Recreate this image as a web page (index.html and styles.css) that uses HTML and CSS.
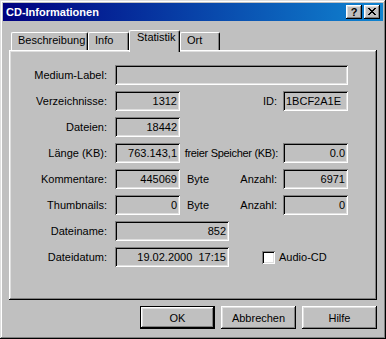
FILE: index.html
```html
<!DOCTYPE html>
<html lang="de">
<head>
  <meta charset="UTF-8">
  <title>CD-Informationen</title>
  <link rel="stylesheet" href="styles.css">
</head>
<body>
  <div class="window">
    <div class="titlebar">
      <span class="title">CD-Informationen</span>
      <span class="tbtn help">?</span>
      <span class="tbtn close">
        <svg width="8" height="7" viewBox="0 0 8 7" shape-rendering="crispEdges">
          <rect x="0" y="0" width="2" height="1"/><rect x="6" y="0" width="2" height="1"/>
          <rect x="1" y="1" width="2" height="1"/><rect x="5" y="1" width="2" height="1"/>
          <rect x="2" y="2" width="4" height="1"/>
          <rect x="3" y="3" width="2" height="1"/>
          <rect x="2" y="4" width="4" height="1"/>
          <rect x="1" y="5" width="2" height="1"/><rect x="5" y="5" width="2" height="1"/>
          <rect x="0" y="6" width="2" height="1"/><rect x="6" y="6" width="2" height="1"/>
        </svg>
      </span>
    </div>

    <div class="content">
      <div class="tabs">
        <div class="tab t-beschreibung">Beschreibung</div>
        <div class="tab t-info">Info</div>
        <div class="tab active t-statistik">Statistik</div>
        <div class="tab t-ort">Ort</div>
      </div>

      <div class="panel">
        <div class="grid">
          <div class="label">Medium-Label:</div>
          <div class="field span3"></div>

          <div class="label">Verzeichnisse:</div>
          <div class="field">1312</div>
          <div class="mid right">ID:</div>
          <div class="field left">1BCF2A1E</div>

          <div class="label">Dateien:</div>
          <div class="field">18442</div>
          <div class="mid"></div>
          <div></div>

          <div class="label">Länge (KB):</div>
          <div class="field">763.143,1</div>
          <div class="mid right tight">freier Speicher (KB):</div>
          <div class="field">0.0</div>

          <div class="label">Kommentare:</div>
          <div class="field">445069</div>
          <div class="mid split"><span>Byte</span><span>Anzahl:</span></div>
          <div class="field">6971</div>

          <div class="label">Thumbnails:</div>
          <div class="field">0</div>
          <div class="mid split"><span>Byte</span><span>Anzahl:</span></div>
          <div class="field">0</div>

          <div class="label">Dateiname:</div>
          <div class="wide"><div class="field long">852</div></div>

          <div class="label">Dateidatum:</div>
          <div class="wide">
            <div class="field long">19.02.2000  17:15</div>
            <label class="check"><span class="box"></span>Audio-CD</label>
          </div>
        </div>
      </div>

      <div class="buttons">
        <button class="btn default">OK</button>
        <button class="btn">Abbrechen</button>
        <button class="btn">Hilfe</button>
      </div>
    </div>
  </div>
</body>
</html>
```

FILE: styles.css
```css
body { margin: 0; background: #c0c0c0; }

.window {
  width: 386px; height: 339px; box-sizing: border-box; padding: 3px;
  background: #c0c0c0; color: #000;
  font: 11px "Liberation Sans", Arial, sans-serif;
  box-shadow: inset -1px -1px #000, inset 1px 1px #dfdfdf, inset -2px -2px #808080, inset 2px 2px #fff;
}

/* title bar */
.titlebar {
  height: 18px; display: flex; align-items: center; padding: 0 3px;
  background: linear-gradient(90deg, #000080, #1084d0); color: #fff;
}
.title { font-weight: bold; flex: 1; }
.tbtn {
  width: 16px; height: 14px; box-sizing: border-box; background: #c0c0c0; color: #000;
  display: flex; align-items: center; justify-content: center;
  font-weight: bold; font-size: 11px; line-height: 14px;
  box-shadow: inset -1px -1px #000, inset 1px 1px #fff, inset -2px -2px #808080, inset 2px 2px #dfdfdf;
}
.help { margin-right: 2px; padding-bottom: 1px; }
.close svg { fill: #000; display: block; margin-top: -1px; }

.content { padding: 9px 6px 0 6px; }

/* tabs */
.tabs { display: flex; align-items: flex-end; height: 20px; padding-left: 2px; }
.tab {
  height: 18px; box-sizing: border-box; padding: 1px 0 0 6px; line-height: 13px;
  border-top: 1px solid #fff; border-left: 1px solid #fff; border-right: 1px solid #000;
  border-radius: 2px 2px 0 0;
  box-shadow: inset -1px 0 #808080;
}
.tab.active {
  height: 22px; margin-bottom: -2px; padding: 0 0 0 7px;
  position: relative; z-index: 1; background: #c0c0c0;
}
.t-beschreibung { width: 77px; }
.t-info { width: 41px; }
.t-statistik { width: 51px; }
.t-ort { width: 40px; }

/* panel */
.panel {
  height: 250px; box-sizing: border-box; padding-top: 15px;
  box-shadow: inset -1px -1px #000, inset 1px 1px #fff, inset -2px -2px #808080, inset 2px 2px #dfdfdf;
}
.grid {
  display: grid; grid-template-columns: 106px 65px 103px 65px;
  row-gap: 6px; grid-auto-rows: 20px;
}
.label { text-align: right; padding-right: 8px; line-height: 20px; white-space: nowrap; }

.field {
  height: 20px; box-sizing: border-box; padding: 0 3px; line-height: 20px;
  text-align: right; white-space: pre; overflow: hidden;
  box-shadow: inset 1px 1px #808080, inset -1px -1px #fff, inset 2px 2px #000, inset -2px -2px #dfdfdf;
}
.field.left { text-align: left; }
.span3 { grid-column: span 3; }
.mid { line-height: 20px; padding: 0 6px 0 7px; white-space: nowrap; }
.mid.right { text-align: right; }
.mid.tight { padding: 0 5px 0 0; letter-spacing: -0.3px; }
.mid.split { display: flex; justify-content: space-between; }
.wide { grid-column: span 3; display: flex; align-items: center; }
.field.long { width: 114px; }

.check { display: flex; align-items: center; margin-left: 33px; }
.box {
  width: 13px; height: 13px; box-sizing: border-box; background: #fff; margin-right: 4px;
  box-shadow: inset 1px 1px #808080, inset -1px -1px #fff, inset 2px 2px #000, inset -2px -2px #dfdfdf;
}

/* buttons */
.buttons { display: flex; justify-content: flex-end; gap: 6px; margin-top: 6px; }
.btn {
  width: 75px; height: 23px; box-sizing: border-box; padding: 0; border: none;
  background: #c0c0c0; font: 11px "Liberation Sans", Arial, sans-serif; color: #000;
  box-shadow: inset -1px -1px #000, inset 1px 1px #fff, inset -2px -2px #808080, inset 2px 2px #dfdfdf;
}
.btn.default { border: 1px solid #000; }
```
